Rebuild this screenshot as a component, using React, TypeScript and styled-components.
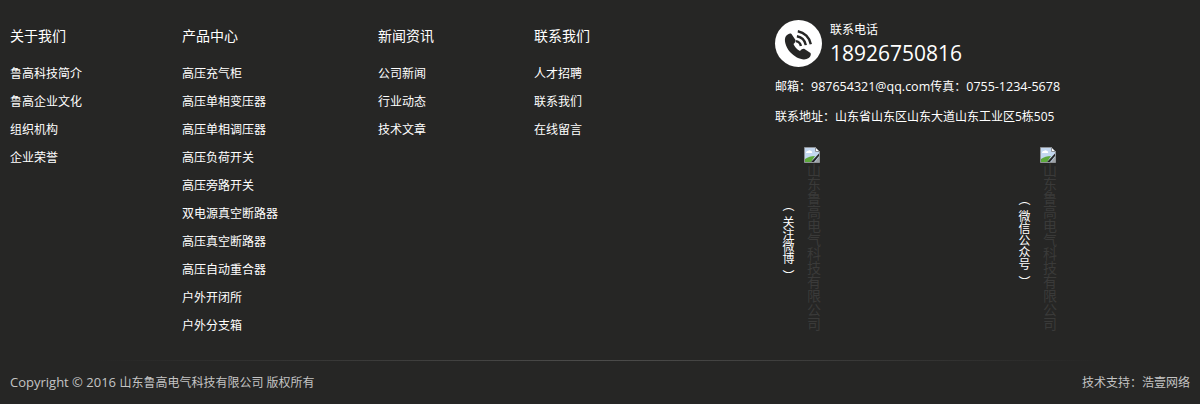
import styled, { createGlobalStyle } from 'styled-components';

const columns = [
  { title: '关于我们', width: 172, items: ['鲁高科技简介', '鲁高企业文化', '组织机构', '企业荣誉'] },
  {
    title: '产品中心',
    width: 196,
    items: [
      '高压充气柜',
      '高压单相变压器',
      '高压单相调压器',
      '高压负荷开关',
      '高压旁路开关',
      '双电源真空断路器',
      '高压真空断路器',
      '高压自动重合器',
      '户外开闭所',
      '户外分支箱',
    ],
  },
  { title: '新闻资讯', width: 156, items: ['公司新闻', '行业动态', '技术文章'] },
  { title: '联系我们', width: 156, items: ['人才招聘', '联系我们', '在线留言'] },
];

const qrCodes = [
  { caption: '关注微博', captionTop: 52 },
  { caption: '微信公众号', captionTop: 46 },
];

function PhoneIcon() {
  return (
    <svg width="47" height="47" viewBox="0 0 47 47" fill="none">
      <path
        d="M11 16C13 14 15 13 16.500 14L20.500 20C21 21.500 20 22.500 18.500 24C19.500 26.500 22 29.500 25 31C26.500 29.500 28 28.500 29.500 29L35.500 33C36.500 35 35 38 31.500 39C27 40.500 20 37.500 15 32C10.500 26.500 8.500 19.500 11 16Z"
        fill="#262625"
      />
      <path d="M21 21.100A6 6 0 0 1 25.900 26" stroke="#262625" strokeWidth="2.400" />
      <path d="M21.900 16.200A11 11 0 0 1 30.800 25.100" stroke="#262625" strokeWidth="2.400" />
      <path d="M22.800 11.200A16 16 0 0 1 35.800 24.200" stroke="#262625" strokeWidth="2.400" />
    </svg>
  );
}

function BrokenImageIcon() {
  return (
    <svg width="16" height="16" viewBox="0 0 16 16">
      <path d="M.5.500h11l4 4v11H.5Z" fill="#c4d8f0" stroke="#8f9296" />
      <path d="M11.500.500v4h4Z" fill="#fff" stroke="#8f9296" />
      <path d="M2 6c0-1.500 1-2 2-2 .5-1 2.500-1 3 0 1 0 1.500 1 1 2Z" fill="#fff" />
      <path d="M1 15v-3c3-2 6-3 10-3l-4 6Z" fill="#5da93c" />
      <path d="M7 15 15 6.500V9l-5 6Z" fill="#262625" />
      <path d="M11 15l4-5v5Z" fill="#9ea2a6" />
    </svg>
  );
}

export default function App() {
  return (
    <>
      <GlobalStyle />
      <Footer>
        <Main>
          <Columns>
            {columns.map((column) => (
              <Column key={column.title} $width={column.width}>
                <Heading>{column.title}</Heading>
                <List>
                  {column.items.map((item) => (
                    <Item key={item}>{item}</Item>
                  ))}
                </List>
              </Column>
            ))}
          </Columns>
          <Contact>
            <PhoneRow>
              <PhoneCircle>
                <PhoneIcon />
              </PhoneCircle>
              <PhoneText>
                <PhoneLabel>联系电话</PhoneLabel>
                <PhoneNumber>18926750816</PhoneNumber>
              </PhoneText>
            </PhoneRow>
            <ContactLine>
              邮箱：<Latin $size={12.5}>987654321@qq.com</Latin>传真：<Latin $size={12.5}>0755-1234-5678</Latin>
            </ContactLine>
            <ContactLine>联系地址：山东省山东区山东大道山东工业区5栋505</ContactLine>
            <QrRow>
              {qrCodes.map((qr) => (
                <QrCode key={qr.caption}>
                  <QrCaption $top={qr.captionTop}>
                    <OpenParen>（</OpenParen>
                    {qr.caption}
                    <CloseParen>）</CloseParen>
                  </QrCaption>
                  <BrokenImage>
                    <BrokenImageIcon />
                    <BrokenAlt>山东鲁高电气科技有限公司</BrokenAlt>
                  </BrokenImage>
                </QrCode>
              ))}
            </QrRow>
          </Contact>
        </Main>
        <Divider />
        <Bottom>
          <span>
            <Latin $size={13}>Copyright © 2016 </Latin>山东鲁高电气科技有限公司 版权所有
          </span>
          <span>技术支持：浩壹网络</span>
        </Bottom>
      </Footer>
    </>
  );
}

const GlobalStyle = createGlobalStyle`
  html, body {
    margin: 0;
    padding: 0;
    background: #262625;
  }
  body {
    font-family: "Open Sans", "Noto Sans CJK SC", sans-serif;
  }
`;

const Footer = styled.footer`
  width: 1200px;
  height: 404px;
  overflow: hidden;
  background: #262625;
  color: #fff;
`;

const Main = styled.div`
  display: flex;
  height: 360px;
  padding-left: 10px;
`;

const Columns = styled.div`
  display: flex;
  width: 765px;
  padding-top: 26px;
`;

const Column = styled.div<{ $width: number }>`
  width: ${(p) => p.$width}px;
`;

const Heading = styled.h4`
  margin: 0 0 14px;
  font-size: 14px;
  font-weight: 400;
  line-height: 20px;
`;

const List = styled.ul`
  margin: 0;
  padding: 0;
  list-style: none;
`;

const Item = styled.li`
  height: 28px;
  font-size: 12px;
  line-height: 28px;
`;

const Contact = styled.div`
  flex: 1;
  padding-top: 20px;
`;

const PhoneRow = styled.div`
  display: flex;
  align-items: flex-start;
  gap: 8px;
  margin-bottom: 5px;
`;

const PhoneCircle = styled.div`
  width: 47px;
  height: 47px;
  border-radius: 50%;
  background: #fff;
`;

const PhoneText = styled.div`
  display: flex;
  flex-direction: column;
`;

const PhoneLabel = styled.span`
  font-size: 12px;
  line-height: 20px;
`;

const PhoneNumber = styled.span`
  font-size: 21px;
  line-height: 26px;
`;

const ContactLine = styled.p`
  margin: 0;
  font-size: 12px;
  line-height: 30px;
`;

const Latin = styled.span<{ $size: number }>`
  font-size: ${(p) => p.$size}px;
  line-height: 1;
`;

const QrRow = styled.div`
  display: flex;
  gap: 52px;
  margin-top: 15px;
`;

const QrCode = styled.div`
  display: flex;
  width: 184px;
`;

const QrCaption = styled.span<{ $top: number }>`
  width: 24px;
  margin-top: ${(p) => p.$top}px;
  margin-right: 5px;
  font-size: 12px;
  line-height: 24px;
  white-space: nowrap;
  writing-mode: vertical-rl;
`;

const OpenParen = styled.span`
  margin-inline-end: 5px;
`;

const CloseParen = styled.span`
  margin-inline-start: 6px;
`;

const BrokenImage = styled.div`
  display: flex;
  flex-direction: column;
  width: 16px;
`;

const BrokenAlt = styled.span`
  align-self: flex-end;
  width: 14px;
  font-size: 14px;
  line-height: 14px;
  color: #3a3a39;
  writing-mode: vertical-rl;
`;

const Divider = styled.div`
  height: 1px;
  background: linear-gradient(90deg, #262625 8%, #4c4c4b 50%, #262625 92%);
`;

const Bottom = styled.div`
  display: flex;
  justify-content: space-between;
  padding: 12px 10px 0;
  font-size: 12px;
  line-height: 20px;
  color: #c4c4c4;
`;
